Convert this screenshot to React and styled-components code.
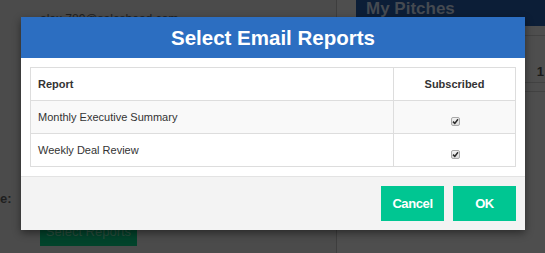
import React from "react";
import styled, { createGlobalStyle } from "styled-components";

const Global = createGlobalStyle`
  html, body { margin: 0; padding: 0; }
  body {
    width: 545px;
    height: 253px;
    overflow: hidden;
    background: #4b4b4b;
    font-family: "Liberation Sans", Arial, sans-serif;
  }
`;

const Page = styled.div`
  position: relative;
  display: flex;
  width: 545px;
  height: 253px;
  background: #4b4b4b;
  overflow: hidden;
`;

const LeftPane = styled.div`
  width: 337px;
  border-right: 1px solid #3e3e3e;
  display: flex;
  flex-direction: column;
  padding-top: 12px;
  box-sizing: border-box;
`;

const Email = styled.div`
  margin-left: 40px;
  font-size: 12px;
  line-height: 14px;
  color: #1f1f1f;
`;

const FieldLabel = styled.div`
  margin-top: 165px;
  font-size: 13px;
  font-weight: bold;
  color: #1f1f1f;
  line-height: 15px;
`;

const GhostButton = styled.div`
  margin-top: 6px;
  margin-left: 40px;
  width: 97px;
  height: 34px;
  background: #02432b;
  color: #2a4d3d;
  font-size: 13px;
  display: flex;
  align-items: center;
  justify-content: center;
  padding-top: 4px;
  box-sizing: border-box;
`;

const RightPane = styled.div`
  flex: 1;
  display: flex;
  flex-direction: column;
  background: #4e4e4e;
`;

const PitchHeader = styled.div`
  margin-left: 19px;
  height: 26px;
  background: #0c1e37;
  display: flex;
  align-items: flex-end;
  padding: 0 0 9px 10px;
  box-sizing: border-box;
  font-size: 17px;
  font-weight: bold;
  color: #454a51;
  line-height: 17px;
`;

const PaneRow = styled.div`
  height: ${(p) => p.h}px;
  border-bottom: 1px solid #424242;
  display: flex;
  align-items: flex-end;
  justify-content: flex-end;
  padding: 0 1px 3px 0;
  font-size: 13px;
  font-weight: bold;
  color: #1a1a1a;
  box-sizing: border-box;
`;

const Modal = styled.div`
  position: absolute;
  top: 17px;
  left: 21px;
  width: 504px;
  background: #fff;
  box-shadow: 0 3px 8px rgba(0, 0, 0, 0.45);
  display: flex;
  flex-direction: column;
`;

const ModalHeader = styled.div`
  height: 41px;
  background: #2c6ec1;
  color: #fff;
  display: flex;
  align-items: center;
  justify-content: center;
  font-size: 20.5px;
  font-weight: bold;
  padding-top: 1px;
  box-sizing: border-box;
`;

const ModalBody = styled.div`
  padding: 9px 9px 9px;
  border-bottom: 1px solid #e3e3e3;
`;

const Table = styled.table`
  width: 100%;
  border-collapse: collapse;
  border: 1px solid #dddddd;
  font-size: 11px;
  color: #333;
`;

const Row = styled.tr`
  background: ${(p) => (p.striped ? "#f9f9f9" : "#ffffff")};
`;

const HeadCell = styled.th`
  height: 32px;
  padding: 0 7px;
  border: 1px solid #dddddd;
  font-weight: bold;
  text-align: ${(p) => (p.center ? "center" : "left")};
  width: ${(p) => (p.narrow ? "107px" : "auto")};
`;

const Cell = styled.td`
  height: 32px;
  padding: 0 7px;
  border: 1px solid #dddddd;
  text-align: ${(p) => (p.center ? "center" : "left")};
`;

const CheckWrap = styled.div`
  display: flex;
  justify-content: center;
  padding-top: 9px;
  padding-left: 1px;
`;

const Check = styled.span`
  width: 7px;
  height: 7px;
  border: 1px solid #a9a9a9;
  border-radius: 2px;
  background: linear-gradient(#f2f2f2, #dcdcdc);
  display: flex;
  align-items: center;
  justify-content: center;
`;

const Footer = styled.div`
  background: #f3f3f3;
  padding: 9px;
  display: flex;
  justify-content: flex-end;
  gap: 9px;
`;

const Button = styled.button`
  width: 63px;
  height: 35px;
  border: none;
  background: #00c692;
  color: #fff;
  font-family: "Liberation Sans", Arial, sans-serif;
  font-size: 13px;
  font-weight: bold;
  letter-spacing: -0.4px;
  padding: 0;
  cursor: pointer;
`;

const CheckBox = () => (
  <CheckWrap>
    <Check>
      <svg width="7" height="7" viewBox="0 0 7 7">
        <path d="M1 3.6 L2.8 5.4 L6 1.2" fill="none" stroke="#2a2a2a" strokeWidth="1.5" />
      </svg>
    </Check>
  </CheckWrap>
);

export default function App() {
  const reports = ["Monthly Executive Summary", "Weekly Deal Review"];
  return (
    <Page>
      <Global />
      <LeftPane>
        <Email>alex.789@salesbead.com</Email>
        <FieldLabel>e:</FieldLabel>
        <GhostButton>Select Reports</GhostButton>
      </LeftPane>
      <RightPane>
        <PitchHeader>My Pitches</PitchHeader>
        <PaneRow h={10} />
        <PaneRow h={47}>1</PaneRow>
        <PaneRow h={9} />
      </RightPane>
      <Modal>
        <ModalHeader>Select Email Reports</ModalHeader>
        <ModalBody>
          <Table>
            <thead>
              <Row>
                <HeadCell>Report</HeadCell>
                <HeadCell center narrow>Subscribed</HeadCell>
              </Row>
            </thead>
            <tbody>
              {reports.map((r, i) => (
                <Row key={r} striped={i === 0}>
                  <Cell>{r}</Cell>
                  <Cell center>
                    <CheckBox />
                  </Cell>
                </Row>
              ))}
            </tbody>
          </Table>
        </ModalBody>
        <Footer>
          <Button>Cancel</Button>
          <Button>OK</Button>
        </Footer>
      </Modal>
    </Page>
  );
}
